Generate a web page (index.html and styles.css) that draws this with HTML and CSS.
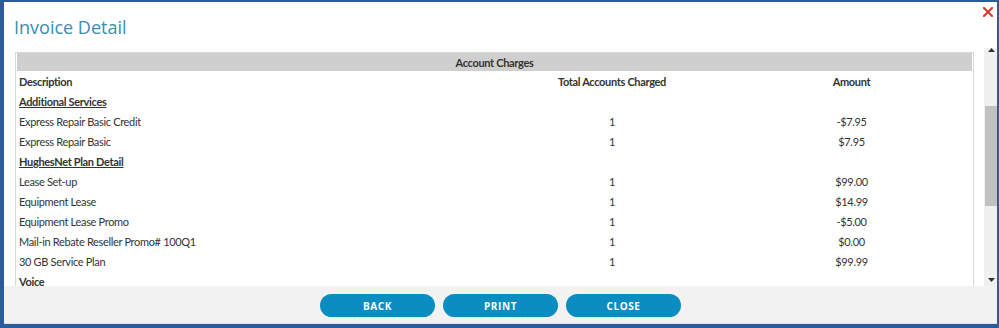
FILE: index.html
```html
<!DOCTYPE html>
<html>
<head>
<meta charset="utf-8">
<link rel="stylesheet" href="styles.css">
</head>
<body>
<div class="modal">
  <div class="modal-head">
    <h1 class="title">Invoice Detail</h1>
    <svg class="close-x" width="10" height="10" viewBox="0 0 10 10"><path d="M1 1L9 9M9 1L1 9" stroke="#d8352a" stroke-width="2" stroke-linecap="square"/></svg>
  </div>
  <div class="modal-body">
    <div class="scroll-content">
      <div class="charges">
        <div class="bar">Account Charges</div>
        <div class="row head">
          <div class="c1">Description</div><div class="c2">Total Accounts Charged</div><div class="c3">Amount</div>
        </div>
        <div class="row"><div class="c1 section">Additional Services</div><div class="c2"></div><div class="c3"></div></div>
        <div class="row"><div class="c1">Express Repair Basic Credit</div><div class="c2">1</div><div class="c3">-$7.95</div></div>
        <div class="row"><div class="c1">Express Repair Basic</div><div class="c2">1</div><div class="c3">$7.95</div></div>
        <div class="row"><div class="c1 section">HughesNet Plan Detail</div><div class="c2"></div><div class="c3"></div></div>
        <div class="row"><div class="c1">Lease Set-up</div><div class="c2">1</div><div class="c3">$99.00</div></div>
        <div class="row"><div class="c1">Equipment Lease</div><div class="c2">1</div><div class="c3">$14.99</div></div>
        <div class="row"><div class="c1">Equipment Lease Promo</div><div class="c2">1</div><div class="c3">-$5.00</div></div>
        <div class="row"><div class="c1">Mail-in Rebate Reseller Promo# 100Q1</div><div class="c2">1</div><div class="c3">$0.00</div></div>
        <div class="row"><div class="c1">30 GB Service Plan</div><div class="c2">1</div><div class="c3">$99.99</div></div>
        <div class="row"><div class="c1 group">Voice</div><div class="c2"></div><div class="c3"></div></div>
      </div>
    </div>
    <div class="scrollbar">
      <svg class="arrow" width="7" height="4" viewBox="0 0 7 4"><path d="M0 4L3.5 0L7 4Z" fill="#333"/></svg>
      <div class="track"><div class="thumb"></div></div>
      <svg class="arrow" width="7" height="4" viewBox="0 0 7 4"><path d="M0 0L3.5 4L7 0Z" fill="#333"/></svg>
    </div>
  </div>
  <div class="modal-foot">
    <button class="btn">BACK</button>
    <button class="btn">PRINT</button>
    <button class="btn">CLOSE</button>
  </div>
</div>
</body>
</html>
```
FILE: styles.css
```css
* { box-sizing: border-box; }
html, body { margin: 0; padding: 0; }
body {
  width: 999px;
  height: 328px;
  overflow: hidden;
  background: #fff;
  font-family: "Open Sans", "DejaVu Sans", sans-serif;
}
.modal {
  width: 999px;
  height: 328px;
  border-style: solid;
  border-color: #2c5d9b;
  border-width: 2px 2px 4px 4px;
  display: flex;
  flex-direction: column;
  background: #fff;
}
.modal-head {
  height: 46px;
  flex: none;
  display: flex;
  justify-content: space-between;
  align-items: flex-start;
  padding: 0 4px 0 10px;
}
.title {
  margin: 13px 0 0 0;
  font-family: "Open Sans", sans-serif;
  font-weight: 400;
  font-size: 18px;
  line-height: 24px;
  color: #3a8db3;
}
.close-x { margin-top: 5px; }
.modal-body {
  flex: 1;
  display: flex;
  min-height: 0;
  overflow: hidden;
}
.scroll-content {
  flex: 1;
  padding: 4px 10px 0 11px;
  overflow: hidden;
}
.charges {
  border: 1px solid #d9d9d9;
  border-bottom: none;
  padding: 0 1px;
  color: #333;
  font-family: Lato, "Open Sans", sans-serif;
  font-size: 11px;
  letter-spacing: -0.33px;
}
.bar {
  height: 18px;
  background: #cfcfcf;
  text-align: center;
  font-weight: 700;
  line-height: 19px;
  color: #333;
}
.row {
  display: grid;
  grid-template-columns: 476px 238px 1fr;
  height: 20px;
  line-height: 22px;
}
.c1 { padding-left: 2px; white-space: nowrap; }
.c2, .c3 { text-align: center; }
.head { font-weight: 700; }
.section { font-weight: 700; text-decoration: underline; }
.group { font-weight: 700; }
.scrollbar {
  width: 13px;
  flex: none;
  background: #f0f0f0;
  display: flex;
  flex-direction: column;
  align-items: center;
  padding: 0 0 4px 0;
}
.arrow { flex: none; margin: 0 0 0 1px; }
.track {
  flex: 1;
  width: 100%;
  padding-top: 54px;
}
.thumb {
  height: 100px;
  background: #c1c1c1;
  margin-left: 1px;
}
.modal-foot {
  height: 38px;
  flex: none;
  background: #f2f2f2;
  border-bottom: 1px solid #d7e2ee;
  display: flex;
  justify-content: center;
  align-items: flex-start;
  gap: 8px;
  padding-top: 8px;
}
.btn {
  width: 115px;
  height: 23px;
  border: none;
  border-radius: 12px;
  background: #0b8dc2;
  color: #fff;
  font-family: "Open Sans", sans-serif;
  font-weight: 700;
  font-size: 10px;
  letter-spacing: 0.6px;
  padding: 0;
}
```
